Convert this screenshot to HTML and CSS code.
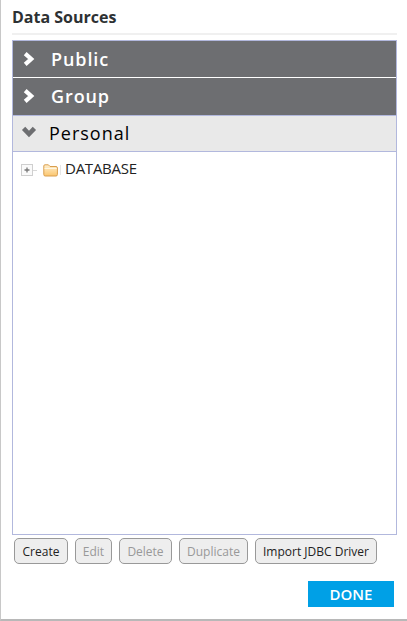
FILE: index.html
```html
<!DOCTYPE html>
<html lang="en">
<head>
<meta charset="utf-8">
<title>Data Sources</title>
<link rel="stylesheet" href="styles.css">
</head>
<body>
<main class="dialog">
  <h1 class="title"><span class="t-title">Data Sources</span></h1>
  <section class="panel">
    <div class="group"><svg class="chevron" viewBox="0 0 14 16"><path d="M3.2 2.6 9.2 8 3.2 13.4"/></svg><span class="t-public">Public</span></div>
    <div class="group second"><svg class="chevron" viewBox="0 0 14 16"><path d="M3.2 2.6 9.2 8 3.2 13.4"/></svg><span class="t-group">Group</span></div>
    <div class="group open"><svg class="chevron down" viewBox="0 0 16 14"><path d="M2.6 3.4 8 9 13.4 3.4"/></svg><span class="t-personal">Personal</span></div>
    <div class="tree">
      <svg class="expander" viewBox="0 0 17 13"><rect x=".5" y=".5" width="11" height="11" fill="#fafafa" stroke="#cfcfcf"/><path d="M3.5 6h5M6 3.5v5" stroke="#777" stroke-width="1.3"/><path d="M12 6.5h4" stroke="#d8d8d8"/></svg>
      <svg class="folder" viewBox="0 0 18 14">
        <defs><linearGradient id="f" x1="0" y1="0" x2="0" y2="1"><stop offset="0" stop-color="#fff0cf"/><stop offset="1" stop-color="#fbc66f"/></linearGradient></defs>
        <path d="M.8 3V2Q.8.8 2 .8H5.4L7 2.5H13Q14.4 2.5 14.4 4V10.5Q14.4 12 13 12H2.2Q.8 12 .8 10.5Z" fill="url(#f)" stroke="#d99e4e"/>
        <path d="M1.5 4.5H13.7" stroke="#fff6e2"/><path d="M17.5 1v10" stroke="#e6e6e6"/>
      </svg>
      <span class="t-db">DATABASE</span>
    </div>
  </section>
  <div class="actions">
    <button class="create">Create</button>
    <button class="edit" disabled>Edit</button>
    <button class="delete" disabled>Delete</button>
    <button class="duplicate" disabled>Duplicate</button>
    <button class="import">Import JDBC Driver</button>
  </div>
  <footer class="footer"><button class="done">DONE</button></footer>
</main>
</body>
</html>
```
FILE: styles.css
```css
* { box-sizing: border-box; }
body { margin: 0; background: #fff; color: #222; font-family: "Open Sans", sans-serif; }
svg { display: block; flex: none; fill: none; }
.dialog { width: 407px; height: 621px; padding: 0 10px 0 11px; border-left: 1px solid #c8c8c8; border-bottom: 2px solid #b8b8b8; display: flex; flex-direction: column; overflow: hidden; }
.title { margin: 0; height: 35px; border-bottom: 2px solid #f0f0f0; font-size: 16px; line-height: 34px; font-weight: 700; color: #2d3133; flex: none; white-space: nowrap; }
.panel { width: 385px; height: 495px; margin-top: 5px; border: 1px solid #b2b8dd; flex: none; }
.group { height: 37px; display: flex; align-items: center; padding-left: 9px; background: #6d6e71; border-bottom: 1px solid #fff; color: #fff; font-size: 18px; font-weight: 600; letter-spacing: .9px; white-space: nowrap; }
.group.second { height: 38px; border-color: #b2b8dd; padding-bottom: 1px; }
.group.open { height: 36px; background: #e9e9e9; border-color: #b2b8dd; color: #000; font-weight: 400; letter-spacing: 1px; padding-bottom: 1px; }
.chevron { width: 14px; height: 16px; margin-right: 15px; stroke: #fff; stroke-width: 4.2; }
.chevron.down { width: 16px; height: 14px; margin: 0 12px 3px -1px; stroke: #6d6e71; stroke-width: 4.6; }
.tree { height: 34px; display: flex; align-items: center; padding-left: 8px; font-size: 15px; letter-spacing: -.25px; white-space: nowrap; }
.expander { width: 17px; height: 13px; margin-top: 3px; }
.folder { width: 18px; height: 14px; margin: 3px 4px 0 5px; }
.t-db { margin-top: -3px; }
.actions { display: flex; gap: 7px; margin: 3px 0 0 2px; }
.actions button { height: 26px; padding: 0; border: 1px solid #999; border-radius: 5px; background: #eee; color: #222; font: 12px "Open Sans", sans-serif; white-space: nowrap; }
.actions button:disabled { color: #999; }
.actions .create { width: 54px; }
.actions .edit { width: 37px; }
.actions .delete { width: 53px; }
.actions .duplicate { width: 69px; }
.actions .import { width: 122px; }
.footer { display: flex; justify-content: flex-end; margin-top: 17px; padding-right: 3px; }
.done { width: 86px; height: 26px; padding: 0; border: 0; background: #00a0e6; color: #fff; font: 600 15px "Open Sans", sans-serif; }
```
